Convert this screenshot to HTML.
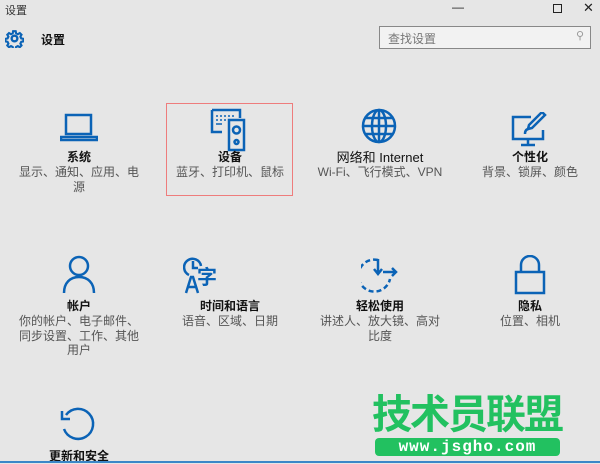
<!DOCTYPE html><html><head><meta charset="utf-8"><style>
*{margin:0;padding:0;box-sizing:border-box}
body{width:600px;height:463px;background:#e6e6e6;position:relative;overflow:hidden;font-family:"Liberation Sans","Noto Sans CJK SC",sans-serif}
.a{position:absolute}
.t{position:absolute;width:140px;text-align:center;font-size:12px;color:#111;font-weight:bold;line-height:15px}
.s{position:absolute;width:124px;text-align:center;font-size:12px;color:#555;line-height:14.5px}
svg{position:absolute;fill:none;stroke:#0b63b6;stroke-width:2.5}
</style></head><body>
<div class="a" style="left:5px;top:2px;font-size:11px;color:#333">设置</div>
<div class="a" style="left:452px;top:0;font-size:12px;color:#222;letter-spacing:0">&#8212;</div>
<div class="a" style="left:553px;top:4px;width:9px;height:9px;border:1px solid #222"></div>
<div class="a" style="left:583px;top:0;font-size:13px;color:#222">✕</div>
<svg style="left:5px;top:29px" width="19" height="19" viewBox="0 0 20 20" stroke-width="1.5"><circle cx="10" cy="10" r="3"/><path d="M8.5 1.5h3l.5 2.5 2 1 2.3-1.3 2 2-1.3 2.3 1 2 2.5.5v3l-2.5.5-1 2 1.3 2.3-2 2-2.3-1.3-2 1-.5 2.5h-3l-.5-2.5-2-1-2.3 1.3-2-2 1.3-2.3-1-2-2.5-.5v-3l2.5-.5 1-2-1.3-2.3 2-2 2.3 1.3 2-1z" transform="scale(.9) translate(1,1)"/></svg>
<div class="a" style="left:41px;top:31px;font-size:12px;font-weight:bold;color:#111">设置</div>
<div class="a" style="left:379px;top:26px;width:212px;height:23px;border:1px solid #888;background:#f2f2f2;font-size:12px;color:#777;padding:3px 0 0 8px">查找设置</div>
<div class="a" style="left:576px;top:29px;font-size:11px;color:#999">⚲</div>
<div class="a" style="left:166px;top:103px;width:127px;height:93px;border:1px solid #ee7c7c"></div>
<svg style="left:60px;top:113px" width="38" height="30" viewBox="0 0 38 30" stroke-width="2"><rect x="6" y="2" width="25" height="19"/><path d="M1 24h36v3H1z"/></svg>
<svg style="left:210px;top:108px" width="40" height="44" viewBox="0 0 40 44" stroke-width="2"><path d="M2 2h28v8M2 2v22h10"/><rect x="19" y="12" width="15" height="30"/><circle cx="26.5" cy="22" r="3.5"/><circle cx="26.5" cy="34" r="2"/><path d="M6 8h2M10 8h2M14 8h2M18 8h2M22 8h2M6 12h2M10 12h2M14 12h2M6 16h6" stroke-width="1.6"/></svg>
<svg style="left:360px;top:107px" width="38" height="38" viewBox="0 0 38 38" stroke-width="2.3"><circle cx="19" cy="19" r="16"/><ellipse cx="19" cy="19" rx="7" ry="16"/><path d="M19 3v32M3 19h32M6 11h26M6 27h26"/></svg>
<svg style="left:511px;top:112px" width="38" height="36" viewBox="0 0 38 36" stroke-width="2"><path d="M20 5H2v22h30V18"/><path d="M17 27v5M10 33h14"/><path d="M34 3l-13 13-4 1 1-4 13-13zM14 22c0-4 2-5 4-5"/></svg>
<div class="t" style="left:9px;top:150px">系统</div><div class="s" style="left:17px;top:165px">显示、通知、应用、电源</div>
<div class="t" style="left:160px;top:150px">设备</div><div class="s" style="left:168px;top:165px">蓝牙、打印机、鼠标</div>
<div class="t" style="left:300px;top:150px;width:160px;font-weight:normal;font-size:13px;color:#111">网络和 Internet</div><div class="s" style="left:300px;top:165px;width:160px">Wi-Fi、飞行模式、VPN</div>
<div class="t" style="left:460px;top:150px">个性化</div><div class="s" style="left:468px;top:165px">背景、锁屏、颜色</div>
<svg style="left:60px;top:255px" width="38" height="40" viewBox="0 0 38 40" stroke-width="2.4"><circle cx="19" cy="11" r="9"/><path d="M4 38c0-10 6-16 15-16s15 6 15 16"/></svg>
<svg style="left:183px;top:257px" width="20" height="38" viewBox="0 0 20 38" stroke-width="2.2"><path d="M6 18A8.5 8.5 0 1 1 18 9M10 4v7h5"/><path d="M3 36l5-16h2l5 16M5 30h8"/></svg>
<div class="a" style="left:197px;top:266px;font-size:20px;line-height:24px;color:#0b63b6;font-weight:bold">字</div>
<svg style="left:361px;top:257px" width="38" height="36" viewBox="0 0 38 36" stroke-width="2.3"><path d="M17 3A16 16 0 1 0 29 22" stroke-dasharray="5 3"/><path d="M17 2v14M13 12l4 5 4-5M22 15h13M31 11l4 4-4 4"/></svg>
<svg style="left:513px;top:255px" width="34" height="40" viewBox="0 0 34 40" stroke-width="2.4"><path d="M8 17V10a9 9 0 0 1 18 0v7"/><rect x="3" y="17" width="28" height="21"/></svg>
<div class="t" style="left:9px;top:299px">帐户</div><div class="s" style="left:17px;top:314px">你的帐户、电子邮件、同步设置、工作、其他用户</div>
<div class="t" style="left:160px;top:299px">时间和语言</div><div class="s" style="left:168px;top:314px">语音、区域、日期</div>
<div class="t" style="left:310px;top:299px">轻松使用</div><div class="s" style="left:318px;top:314px">讲述人、放大镜、高对比度</div>
<div class="t" style="left:460px;top:299px">隐私</div><div class="s" style="left:468px;top:314px">位置、相机</div>
<svg style="left:59px;top:405px" width="38" height="38" viewBox="0 0 38 38" stroke-width="2.4"><path d="M7 10A15 15 0 1 1 5 24"/><path d="M3 6v8h8" /></svg>
<div class="t" style="left:9px;top:449px">更新和安全</div>
<div class="a" style="left:372px;top:390px;font-size:40px;font-weight:bold;color:#22c160;letter-spacing:-2px;line-height:50px">技术员联盟</div>
<div class="a" style="left:375px;top:438px;width:185px;height:18px;background:#22c160;border-radius:4px;color:#fff;font-family:'Liberation Mono',monospace;font-weight:bold;font-size:16px;text-align:center;line-height:18px;letter-spacing:1px">www.jsgho.com</div>
<div class="a" style="left:0;top:461px;width:600px;height:2px;background:#3c87c8"></div>
</body></html>
